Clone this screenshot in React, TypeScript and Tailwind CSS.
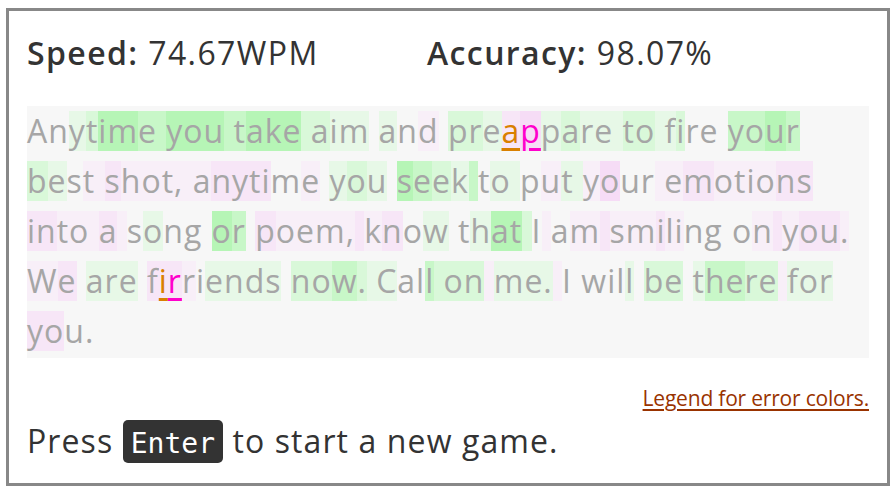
import React from 'react';

// background tint per character: digits = green (fast), letters = pink (slow)
const tints: Record<string, string> = {
  '.': '',
  '1': 'bg-[#e7f8e7]',
  '2': 'bg-[#d9f8d9]',
  '3': 'bg-[#c8f7c8]',
  '4': 'bg-[#b6f5b6]',
  a: 'bg-[#f8eff8]',
  b: 'bg-[#f7e6f7]',
  c: 'bg-[#f6dcf6]',
};

type Line = { text: string; tint: string; errors?: Record<number, 'first' | 'second'> };

const lines: Line[] = [
  {
    text: 'Anytime you take aim and preappare to fire your',
    tint: '..124433444334442211.1.a.221bc12111221' + '12..' + '.' + '3343',
    errors: { 28: 'first', 29: 'second' },
  },
  {
    text: 'best shot, anytime you seek to put your emotions',
    tint: '21.aabaaaaaabbbb.a.121.43213.11.a11ac..aabaaaabbc',
    errors: {},
  },
  {
    text: 'into a song or poem, know that I am smiling on you.',
    tint: 'bbaaaba.1...43.baaaab' + 'ab.1..1442.a.abaabaa...' + '.aba' + 'bba.',
    errors: {},
  },
  {
    text: 'We are firriends now. Call on me. I will be there for',
    tint: 'ab.111.bbba.1111.22321' + '1..32' + '22a111a..' + '...1.22.13322a111',
    errors: { 8: 'first', 9: 'second' },
  },
  { text: 'you.', tint: 'bb..' },
];

const TypedLine: React.FC<{ line: Line }> = ({ line }) => (
  <div className="flex h-[50px] items-center whitespace-pre">
    {line.text.split('').map((ch, i) => {
      const err = line.errors?.[i];
      const tint = tints[line.tint[i] ?? '.'] ?? '';
      let color = 'text-[#a6a6a6]';
      if (err === 'first') color = 'text-[#d98000] underline decoration-[3px] underline-offset-[5px]';
      if (err === 'second') color = 'text-[#ff00cc] underline decoration-[3px] underline-offset-[5px]';
      return (
        <span key={i} className={`inline-block h-10 leading-[40px] ${tint} ${color}`}>
          {ch}
        </span>
      );
    })}
  </div>
);

export default function App() {
  return (
    <div className="h-[486px] w-[893px] overflow-hidden bg-white pl-[6px] pt-[8px] font-['Open_Sans',sans-serif]">
      <div className="flex h-[478px] w-[884px] flex-col border-[3px] border-[#888] px-[18px] pt-[18px] pb-[18px] text-[#333]">
        <div className="flex h-[48px] text-[32px] leading-[48px] tracking-[1.4px]">
          <div className="w-[400px]">
            <span className="font-semibold">Speed:</span> 74.67WPM
          </div>
          <div>
            <span className="font-semibold">Accuracy:</span> 98.07%
          </div>
        </div>

        <div className="mt-[29px] h-[252px] bg-[#f7f7f7] text-[32px] tracking-[1px]">
          {lines.map((line, i) => (
            <TypedLine key={i} line={line} />
          ))}
        </div>

        <div className="mt-[24px] flex h-[33px] justify-end text-[21px] leading-[33px] tracking-[-0.2px]">
          <a href="#" className="text-[#993300] underline decoration-2 underline-offset-[3px]">
            Legend for error colors.
          </a>
        </div>

        <div className="mt-[2px] h-[48px] text-[32px] leading-[48px] tracking-[1.1px]">
          Press{' '}
          <kbd className="inline-block rounded-[5px] bg-[#333] px-[8px] pt-[7px] pb-[3px] font-['DejaVu_Sans_Mono',monospace] text-[28px] leading-[33px] tracking-normal text-white">
            Enter
          </kbd>{' '}
          to start a new game.
        </div>
      </div>
    </div>
  );
}
